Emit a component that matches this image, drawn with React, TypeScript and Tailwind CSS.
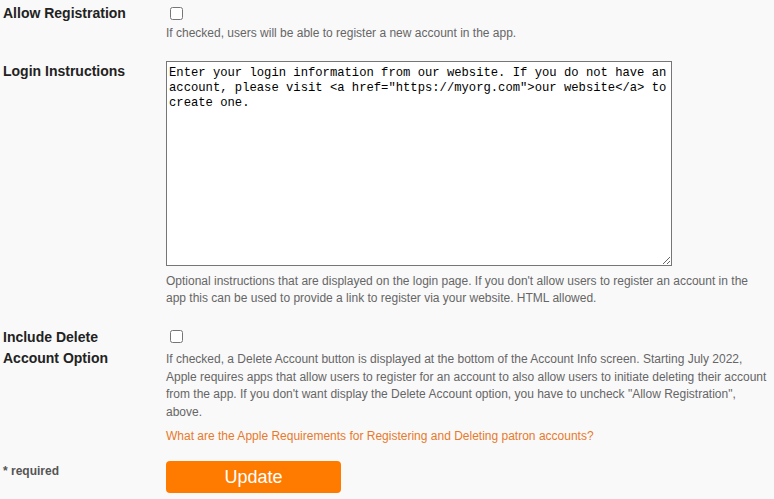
import { useState } from 'react';

const initialText =
  'Enter your login information from our website. If you do not have an account, please visit <a href="https://myorg.com">our website</a> to create one.';

const Row = ({ label, children, className = '' }: { label: React.ReactNode; children: React.ReactNode; className?: string }) => (
  <div className={`flex ${className}`}>
    <div className="w-[166px] shrink-0 pl-[3px] text-[14px] font-bold leading-[21px] text-[#222]">{label}</div>
    <div className="w-[606px]">{children}</div>
  </div>
);

export default function App() {
  const [allowReg, setAllowReg] = useState(false);
  const [allowDelete, setAllowDelete] = useState(false);
  const [text, setText] = useState(initialText);

  return (
    <div className="min-h-[499px] w-full bg-[#f9f9f9] font-['Liberation_Sans',Arial,sans-serif]">
      <Row label="Allow Registration" className="pt-[3px]">
        <div className="h-[21px] pt-[4px] pl-[4px]">
          <input
            type="checkbox"
            checked={allowReg}
            onChange={(e) => setAllowReg(e.target.checked)}
            className="m-0 block h-[13px] w-[13px]"
          />
        </div>
        <p className="text-[12px] leading-[18px] text-[#666]">
          If checked, users will be able to register a new account in the app.
        </p>
      </Row>

      <Row label="Login Instructions" className="mt-[19px]">
        <textarea
          value={text}
          onChange={(e) => setText(e.target.value)}
          className="block h-[205px] w-[506px] resize border border-[#767676] bg-white px-[2px] pt-[4px] pb-[2px] font-['Liberation_Mono','Courier_New',monospace] text-[12.2px] leading-[15px] text-black outline-none"
        />
        <p className="mt-[7px] text-[12px] leading-[17px] text-[#666]">
          Optional instructions that are displayed on the login page. If you don't allow users to register an account in the
          <br />
          app this can be used to provide a link to register via your website. HTML allowed.
        </p>
      </Row>

      <Row label={<div className="pt-[1px]">Include Delete<br />Account Option</div>} className="mt-[19px]">
        <div className="h-[25px] pt-[4px] pl-[4px]">
          <input
            type="checkbox"
            checked={allowDelete}
            onChange={(e) => setAllowDelete(e.target.checked)}
            className="m-0 block h-[13px] w-[13px]"
          />
        </div>
        <p className="text-[12px] leading-[17.7px] text-[#666]">
          If checked, a Delete Account button is displayed at the bottom of the Account Info screen. Starting July 2022,
          <br />
          Apple requires apps that allow users to register for an account to also allow users to initiate deleting their account
          <br />
          from the app. If you don't want display the Delete Account option, you have to uncheck "Allow Registration",
          <br />
          above.
        </p>
        <a href="#" className="mt-[5px] block text-[12px] leading-[18px] text-[#e8792b]">
          What are the Apple Requirements for Registering and Deleting patron accounts?
        </a>
      </Row>

      <div className="mt-[16px] flex">
        <div className="w-[166px] shrink-0 pt-[2px] pl-[3px] text-[12px] font-bold leading-[16px] text-[#555]">* required</div>
        <button
          type="button"
          className="h-[32px] w-[175px] rounded-[4px] bg-[#ff7b00] text-[18px] leading-[32px] text-white"
        >
          Update
        </button>
      </div>
    </div>
  );
}
